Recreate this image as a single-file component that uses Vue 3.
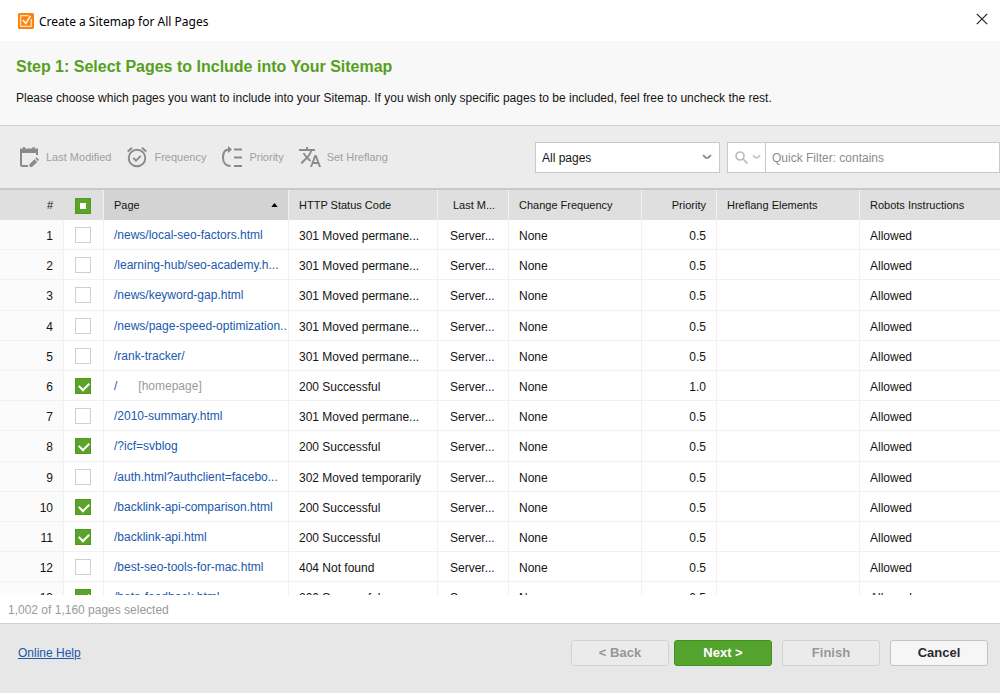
<script setup>
import { ref } from 'vue'

const moved = '301 Moved permane...'
const ok = '200 Successful'
const rows = ref([
  { path: '/news/local-seo-factors.html', status: moved, on: false },
  { path: '/learning-hub/seo-academy.h...', status: moved, on: false },
  { path: '/news/keyword-gap.html', status: moved, on: false },
  { path: '/news/page-speed-optimization..', status: moved, on: false },
  { path: '/rank-tracker/', status: moved, on: false },
  { path: '/', note: '[homepage]', status: ok, on: true, priority: '1.0' },
  { path: '/2010-summary.html', status: moved, on: false },
  { path: '/?icf=svblog', status: ok, on: true },
  { path: '/auth.html?authclient=facebo...', status: '302 Moved temporarily', on: false },
  { path: '/backlink-api-comparison.html', status: ok, on: true },
  { path: '/backlink-api.html', status: ok, on: true },
  { path: '/best-seo-tools-for-mac.html', status: '404 Not found', on: false },
  { path: '/beta-feedback.html', status: ok, on: true },
])
const filter = ref('')
const scope = ref('All pages')
</script>

<template>
  <div class="dialog">
    <header class="titlebar">
      <svg class="logo" viewBox="0 0 16 16" aria-hidden="true">
        <rect width="16" height="16" rx="1.5" fill="#ff8210" />
        <path d="M10.5 2.7H2.7v10.6h10.6V6" fill="none" stroke="#ffe2bd" stroke-width="1.2" />
        <path d="M5 7.2l2.8 3.3 4.6-7.6" fill="none" stroke="#fff" stroke-width="1.4" />
      </svg>
      <span class="title">Create a Sitemap for All Pages</span>
      <button class="close" type="button" aria-label="Close">
        <svg viewBox="0 0 12 12"><path d="M.8.8l10.4 10.4M11.2.8L.8 11.2" stroke="#222" stroke-width="1.2" /></svg>
      </button>
    </header>

    <section class="intro">
      <h1>Step 1: Select Pages to Include into Your Sitemap</h1>
      <p>Please choose which pages you want to include into your Sitemap. If you wish only specific pages to be included, feel free to uncheck the rest.</p>
    </section>

    <div class="toolbar">
      <div class="tools">
        <button class="tool" type="button">
          <svg viewBox="0 0 22 22" fill="none" stroke="#8a8a8a" stroke-width="2">
            <path d="M10 20H4.500Q3 20 3 18.500V3.500H19V9" />
            <path d="M2 3h18v4H2z" fill="#8a8a8a" stroke="none" />
            <path d="M6 1v3M15.500 1v3" />
            <path d="M11.500 21v-2.800l5-5 2.700 2.700-5.200 5.100zM17.300 12.400l1.200-1.200 2.600 2.700-1.200 1.200z" fill="#8a8a8a" stroke="none" />
          </svg>
          Last Modified
        </button>
        <button class="tool" type="button">
          <svg viewBox="0 0 22 22" fill="none" stroke="#8a8a8a" stroke-width="1.900">
            <circle cx="11" cy="12" r="8.300" />
            <path d="M7.300 12l2.700 2.700 4.800-4.900M1.700 5.500l4.400-3.800M20.300 5.500l-4.400-3.800" />
          </svg>
          Frequency
        </button>
        <button class="tool" type="button">
          <svg viewBox="0 0 22 22" fill="none" stroke="#8a8a8a" stroke-width="2">
            <path d="M8 3.500C4 3.500 2 7 2 11.500S4.500 20 9.500 20M13 3.500h8M13 11.500h8M13 20h8" />
            <path d="M7 0l4 3.500L7 7z" fill="#8a8a8a" stroke="none" />
          </svg>
          Priority
        </button>
        <button class="tool" type="button">
          <svg viewBox="1 2 22 20" fill="#8a8a8a">
            <path d="M12.870 15.070l-2.540-2.510.03-.03c1.740-1.940 2.980-4.170 3.710-6.530H17V4h-7V2H8v2H1v1.990h11.170C11.500 7.920 10.440 9.750 9 11.350 8.070 10.320 7.300 9.190 6.690 8h-2c.73 1.630 1.730 3.170 2.980 4.560l-5.090 5.020L4 19l5-5 3.110 3.110.76-2.040zM18.500 10h-2L12 22h2l1.120-3h4.750L21 22h2l-4.500-12zm-2.620 7l1.620-4.330L19.120 17h-3.240z" />
          </svg>
          Set Hreflang
        </button>
      </div>
      <div class="scope">
        <select v-model="scope" aria-label="Page scope">
          <option>All pages</option>
        </select>
        <svg class="caret" viewBox="0 0 10 6"><path d="M1 1.200l2.600 2.300q1.400 1 2.800 0L9 1.200" fill="none" stroke="#858585" stroke-width="1.700" /></svg>
      </div>
      <div class="filter">
        <button type="button" aria-label="Filter options">
          <svg class="glass" viewBox="0 0 13 13" fill="none" stroke="#bdbdbd" stroke-width="1.700">
            <circle cx="5" cy="5" r="4" /><path d="M8 8l4.500 4.500" />
          </svg>
          <svg class="mini" viewBox="0 0 10 6"><path d="M1 1.200l2.600 2.300q1.400 1 2.800 0L9 1.200" fill="none" stroke="#bdbdbd" stroke-width="1.700" /></svg>
        </button>
        <input v-model="filter" type="text" placeholder="Quick Filter: contains" aria-label="Quick Filter: contains">
      </div>
    </div>

    <main class="grid">
      <table>
        <colgroup>
          <col class="c-num"><col class="c-check"><col class="c-page"><col class="c-status"><col class="c-mod"><col class="c-freq"><col class="c-prio"><col class="c-href"><col>
        </colgroup>
        <thead>
          <tr>
            <th class="right">#</th>
            <th class="center"><input class="box partial" type="checkbox" aria-label="Select all pages"></th>
            <th class="sorted"><span class="sort">Page <svg viewBox="0 0 8 5"><path d="M0 5l4-5 4 5z" /></svg></span></th>
            <th>HTTP Status Code</th>
            <th class="mod">Last M...</th>
            <th>Change Frequency</th>
            <th class="right">Priority</th>
            <th>Hreflang Elements</th>
            <th>Robots Instructions</th>
          </tr>
        </thead>
        <tbody>
          <tr v-for="(row, i) in rows" :key="row.path">
            <td class="right num">{{ i + 1 }}</td>
            <td class="center"><input v-model="row.on" class="box" type="checkbox" :aria-label="'Include ' + row.path"></td>
            <td class="page"><a href="#">{{ row.path }}</a><span v-if="row.note" class="note">{{ row.note }}</span></td>
            <td>{{ row.status }}</td>
            <td class="server">Server...</td>
            <td>None</td>
            <td class="right">{{ row.priority || '0.5' }}</td>
            <td></td>
            <td>Allowed</td>
          </tr>
        </tbody>
      </table>
    </main>
    <div class="summary">1,002 of 1,160 pages selected</div>

    <footer class="footer">
      <a href="#">Online Help</a>
      <div class="actions">
        <button type="button" disabled>&lt; Back</button>
        <button type="button" class="primary">Next &gt;</button>
        <button type="button" class="spaced" disabled>Finish</button>
        <button type="button" class="spaced">Cancel</button>
      </div>
    </footer>
  </div>
</template>

<style>
body { margin: 0; }
</style>

<style scoped>
* { box-sizing: border-box; }
.dialog {
  display: flex; flex-direction: column; height: 100vh; overflow: hidden;
  font: 12px/16px "Liberation Sans", Arial, sans-serif; color: #141414; background: #fff;
}
button, select, input { font: inherit; color: inherit; margin: 0; }
svg { display: block; flex: none; }

.titlebar { display: flex; align-items: center; gap: 5px; height: 41px; padding: 0 12px 0 18px; flex: none; }
.logo { width: 16px; height: 16px; }
.title { flex: 1; padding-top: 2px; font: 12px/18px "Noto Sans", "Open Sans", sans-serif; color: #000; }
.close { width: 12px; height: 12px; padding: 0; margin-bottom: 3px; border: 0; background: none; }
.close svg { width: 12px; height: 12px; }

.intro { flex: none; height: 84px; padding: 17px 16px 0; background: #f8f8f8; }
h1 { margin: 0 0 13px; font-size: 16px; line-height: 18px; color: #55a01e; }
p { margin: 0; line-height: 18px; }

.toolbar {
  flex: none; display: flex; align-items: center; height: 65px; padding-left: 18px;
  background: #ececec; border-top: 1px solid #d4d4d4; border-bottom: 2px solid #c8c8c8;
}
.tools { flex: 1; display: flex; gap: 15px; }
.tool { display: flex; align-items: center; gap: 6px; padding: 0; border: 0; background: none; color: #a0a0a0; font-size: 11px; white-space: nowrap; }
.tool svg { width: 22px; height: 22px; }
.scope { position: relative; width: 185px; margin-right: 7px; }
select { appearance: none; width: 100%; height: 31px; padding: 1px 6px 0; border: 1px solid #c9c9c9; border-radius: 0; background: #fff; }
.caret { position: absolute; right: 8px; top: 12px; width: 10px; height: 6px; pointer-events: none; }
.filter { display: flex; width: 273px; height: 31px; border: 1px solid #c9c9c9; background: #fff; }
.filter button { display: flex; align-items: center; gap: 4px; width: 38px; padding: 0 0 0 7px; border: 0; border-right: 1px solid #c9c9c9; background: none; }
.glass { width: 13px; height: 13px; }
.mini { width: 9px; height: 6px; }
.filter input { flex: 1; min-width: 0; padding: 1px 6px 0; border: 0; background: none; }
.filter input::placeholder { color: #8c8c8c; opacity: 1; }

.grid { flex: 1; min-height: 0; overflow: hidden; }
table { width: 100%; table-layout: fixed; border-collapse: separate; border-spacing: 0; }
.c-num { width: 64px; }
.c-check { width: 40px; }
.c-page { width: 185px; }
.c-status { width: 149px; }
.c-mod { width: 71px; }
.c-freq { width: 133px; }
.c-prio { width: 75px; }
.c-href { width: 143px; }
th, td { padding: 0 10px; text-align: left; white-space: nowrap; overflow: hidden; border-right: 1px solid #f1f1f1; }
th { height: 30px; font-size: 11px; font-weight: 400; background: #dfdfdf; }
td { height: 30px; padding-top: 2px; border-bottom: 1px solid #f1f1f1; }
tbody tr:nth-child(5n - 2) td { height: 31px; }
tbody tr:last-child td { height: 30px; }
th:first-child { border-right-color: #dfdfdf; }
th:last-child, td:last-child { border-right: 0; }
.right { text-align: right; }
.center { padding: 0 1px 0 0; text-align: center; }
.num { background: #fbfbfb; }
.sorted { background: #d3d3d3; }
.sort { display: flex; align-items: center; justify-content: space-between; }
.sort svg { width: 7px; height: 4px; }
th.mod { padding-left: 15px; }
.server { padding-left: 12px; }
.page { padding-top: 0; padding-right: 0; }
.page a { color: #2058ac; text-decoration: none; }
.note { margin-left: 21px; color: #9c9c9c; }
.box { appearance: none; display: inline-block; width: 16px; height: 16px; border: 1px solid #cfcfcf; background: #fff; vertical-align: middle; position: relative; }
.box:checked, .partial { border-color: #4d9a1d; background: #5ba32b; }
.box:checked::after { content: ""; position: absolute; left: 3px; top: 3px; width: 8px; height: 5px; border: solid #fff; border-width: 0 0 2px 2px; transform: rotate(-45deg); }
.partial::after { content: ""; position: absolute; inset: 4px; background: #fff; }

.summary { flex: none; height: 28px; padding: 7px 8px 0; color: #999; background: #fff; }
.footer { flex: none; display: flex; align-items: center; justify-content: space-between; height: 70px; padding: 0 12px 12px 18px; background: #e7e7e7; border-top: 1px solid #cfcfcf; }
.footer a { color: #2058ac; }
.actions { display: flex; gap: 5px; }
.actions button { width: 98px; height: 26px; padding: 0; border: 1px solid #c4c4c4; border-radius: 3px; background: #f6f6f6; font-size: 13px; font-weight: 700; color: #2a2a2a; }
.actions button:disabled { background: #ebebeb; border-color: #d3d3d3; color: #979797; }
.actions .primary { background: #54a32f; border-color: #43931b; color: #fff; }
.spaced { margin-left: 5px; }
</style>
